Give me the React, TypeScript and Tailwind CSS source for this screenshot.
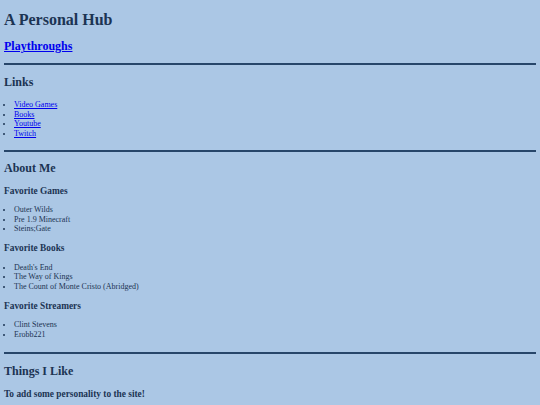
const links = ["Video Games", "Books", "Youtube", "Twitch"];

const favorites = [
  { title: "Favorite Games", items: ["Outer Wilds", "Pre 1.9 Minecraft", "Steins;Gate"] },
  { title: "Favorite Books", items: ["Death's End", "The Way of Kings", "The Count of Monte Cristo (Abridged)"] },
  { title: "Favorite Streamers", items: ["Clint Stevens", "Erobb221"] },
];

function Rule({ top }: { top: string }) {
  return <hr className={`${top} mb-[4px] border-0 border-t-2 border-[#27466a]`} />;
}

export default function App() {
  return (
    <div className="flow-root min-h-screen bg-[#abc7e5] px-[4px] font-['Liberation_Serif',serif] leading-[normal] text-[#1c3453]">
      <h1 className="my-[10.72px] text-[16px] font-bold">A Personal Hub</h1>
      <h2 className="mt-[9.96px] mb-[9px] text-[12px] font-bold">
        <a href="#" className="text-[#0000ee] underline">
          Playthroughs
        </a>
      </h2>

      <Rule top="mt-[4px]" />

      <h2 className="my-[9.96px] text-[12px] font-bold">Links</h2>
      <ul className="my-[8px] list-disc pl-[10px] text-[8px] leading-[9.5px]">
        {links.map((l) => (
          <li key={l}>
            <a href="#" className="text-[#0000ee] underline">
              {l}
            </a>
          </li>
        ))}
      </ul>

      <Rule top="mt-[12px]" />

      <h2 className="mt-[9px] mb-[9px] text-[12px] font-bold">About Me</h2>
      {favorites.map((f) => (
        <div key={f.title} className="contents">
          <h3 className="my-[9.5px] text-[9.36px] font-bold">{f.title}</h3>
          <ul className="my-[8px] list-disc pl-[10px] text-[8px] leading-[9.5px]">
            {f.items.map((i) => (
              <li key={i}>{i}</li>
            ))}
          </ul>
        </div>
      ))}

      <Rule top="mt-[12.5px]" />

      <h2 className="my-[9.96px] text-[12px] font-bold">Things I Like</h2>
      <h3 className="my-[9.36px] text-[9.36px] font-bold">To add some personality to the site!</h3>
    </div>
  );
}
